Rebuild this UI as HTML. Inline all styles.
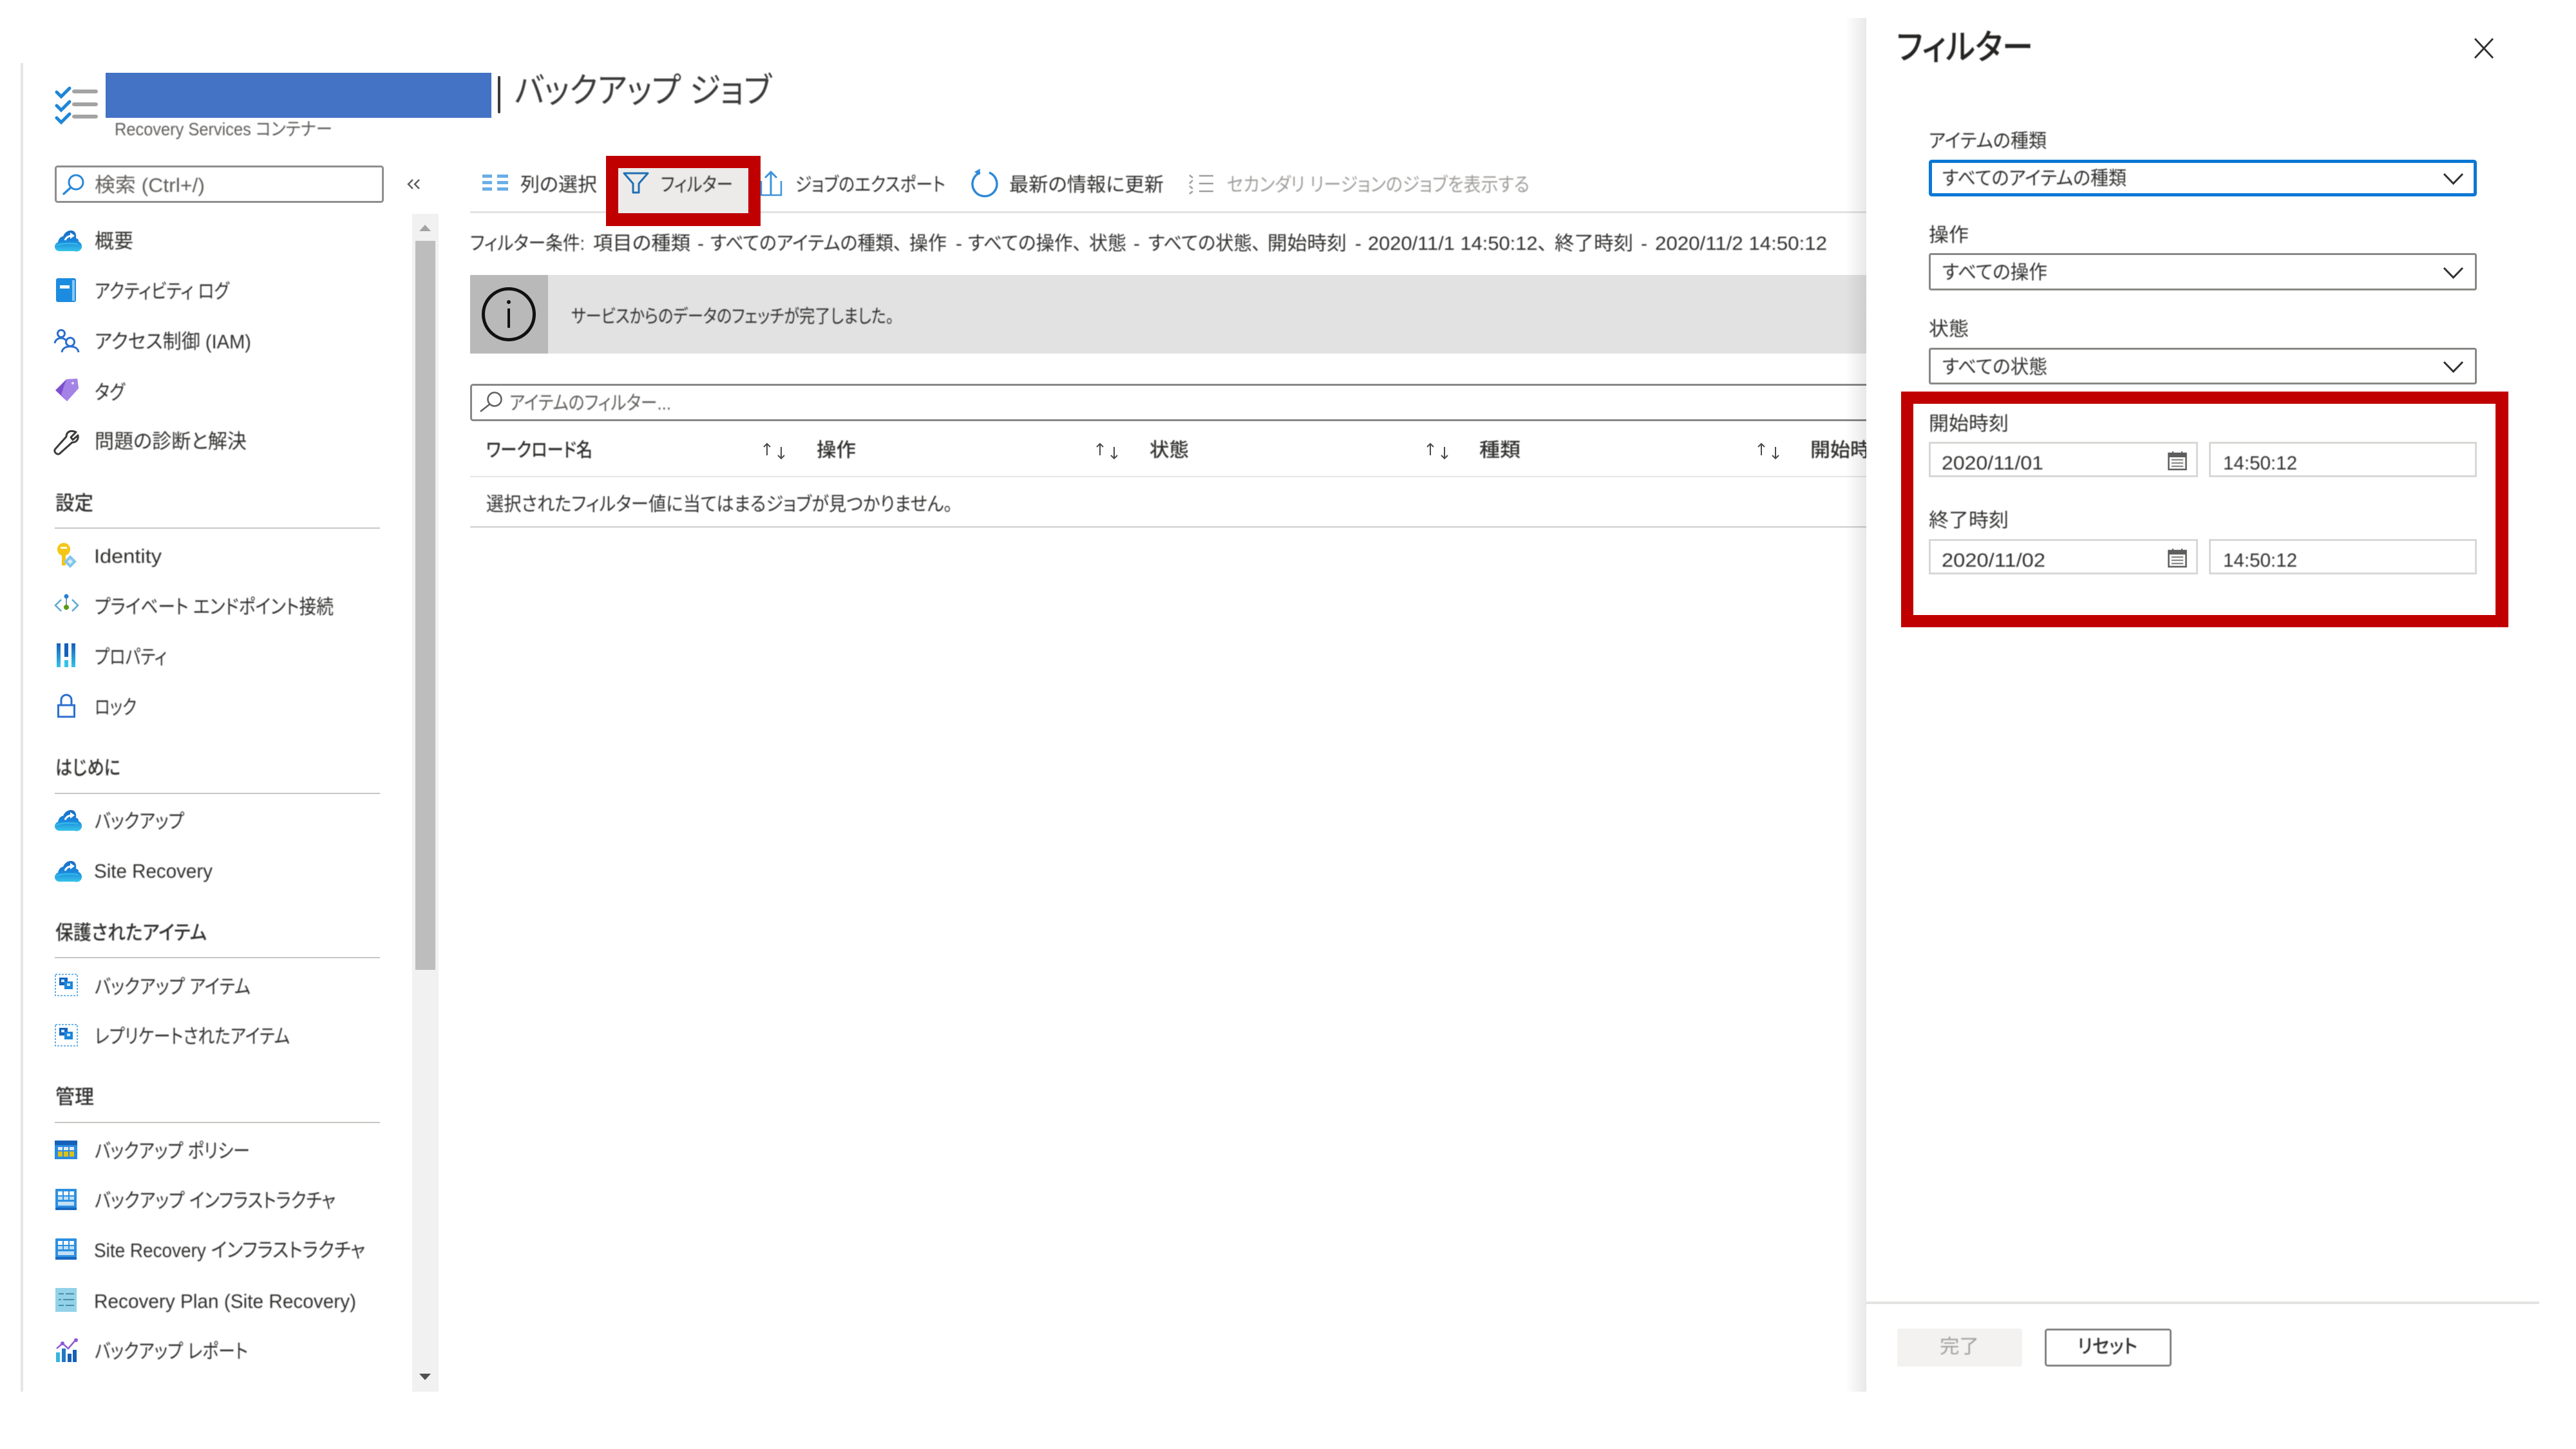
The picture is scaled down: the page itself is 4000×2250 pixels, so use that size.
<!DOCTYPE html>
<html lang="ja">
<head>
<meta charset="utf-8">
<title>バックアップ ジョブ</title>
<style>
html,body{margin:0;padding:0;background:#fff;width:4000px;height:2250px;overflow:hidden}
svg{display:block;position:absolute;left:0;top:0}
text{font-family:"Liberation Sans","Noto Sans CJK JP",sans-serif;font-feature-settings:"palt";fill:#323130;font-size:31px}
.txt{filter:blur(.85px)}
.b{font-weight:700;fill:#3b3a39}
.m{font-weight:500}
.g{fill:#605e5c}
.d{fill:#a19f9d}
.s{font-size:30px}
.ln{fill:#c8c6c4}
</style>
</head>
<body>
<svg width="4000" height="2250" viewBox="0 0 4000 2250" xmlns="http://www.w3.org/2000/svg">
<defs>
<linearGradient id="sh" x1="0" x2="1" y1="0" y2="0"><stop offset="0" stop-color="#000" stop-opacity="0"/><stop offset="1" stop-color="#000" stop-opacity=".09"/></linearGradient>
<linearGradient id="cl" x1="0" x2="0" y1="0" y2="1"><stop offset="0" stop-color="#1b6ec2"/><stop offset=".5" stop-color="#1a86dc"/><stop offset="1" stop-color="#38c6ea"/></linearGradient>
<linearGradient id="bar" x1="0" x2="0" y1="0" y2="1"><stop offset="0" stop-color="#1560b8"/><stop offset="1" stop-color="#35c3e8"/></linearGradient>
<symbol id="cloud" viewBox="0 0 37 33" overflow="visible">
<path d="M7 33a7 7 0 0 1-2-13.700C6 13 10 10 13 10c2-6 8-10 14-9 5 1 7 6 6 12 4 1 4 3 4 5a8 8 0 0 1-6 15z" fill="url(#cl)"/>
<path d="M16 16c2-5 6-7 12-7" fill="none" stroke="#fff" stroke-width="3"/><path d="M24 4l7 5-7 5z" fill="#fff"/>
<path d="M1 24q16-5 35-2" fill="none" stroke="#3ccbee" stroke-width="2" opacity=".7"/>
</symbol>
<symbol id="dash" viewBox="0 0 36 35" overflow="visible">
<rect x="1" y="1" width="34" height="33" fill="#fff" stroke="#5aa9e6" stroke-width="1.800" stroke-dasharray="3 2"/>
<rect x="7" y="6" width="13" height="12" fill="#1665c0"/><rect x="15" y="12" width="13" height="12" fill="#1a86dc"/>
<rect x="10" y="9" width="5" height="4" fill="#cfe6f8"/><rect x="19" y="15" width="5" height="4" fill="#cfe6f8"/>
</symbol>
<symbol id="tbl" viewBox="0 0 33 33" overflow="visible">
<rect width="33" height="33" rx="1" fill="#2d8fe0"/><rect x="0" y="29" width="33" height="4" fill="#1766c0"/>
<g fill="#fff"><rect x="4" y="4" width="7" height="6"/><rect x="13" y="4" width="7" height="6"/><rect x="22" y="4" width="7" height="6"/></g>
<g fill="#bfe0f6"><rect x="4" y="12" width="7" height="5"/><rect x="13" y="12" width="7" height="5"/><rect x="22" y="12" width="7" height="5"/><rect x="4" y="20" width="25" height="6"/></g>
</symbol>
<symbol id="sort" viewBox="0 0 40 27" overflow="visible">
<g fill="none" stroke="#4a4948" stroke-width="2"><path d="M9 20V2M4 7l5-5 5 5"/><path d="M31 7v18M26 20l5 5 5-5"/></g>
</symbol>
<symbol id="chev" viewBox="0 0 31 17" overflow="visible">
<path d="M1 1l14.500 15L30 1" fill="none" stroke="#323130" stroke-width="3"/>
</symbol>
<symbol id="cal" viewBox="0 0 30 29" overflow="visible">
<rect x="1.500" y="3" width="27" height="25" fill="#f4f4f4" stroke="#5f5e5d" stroke-width="2.500"/>
<rect x="1.500" y="3" width="27" height="6" fill="#5f5e5d"/>
<path d="M8 0v5M22 0v5" stroke="#5f5e5d" stroke-width="2"/>
<g fill="#8a8886"><rect x="6" y="12" width="18" height="2"/><rect x="6" y="17" width="18" height="2"/><rect x="6" y="22" width="18" height="2"/></g>
</symbol>
</defs>

<!-- outer page edge -->
<rect x="32" y="98" width="4" height="2063" fill="#e6e6e6"/>

<!-- header -->
<g fill="none" stroke-linecap="round">
<path d="M88 143l7 7 13-13M88 164l7 7 13-13M88 183l7 7 13-13" stroke="#1c86d8" stroke-width="5"/>
<path d="M115 142h34M115 162h34M115 181h34" stroke="#a3a3a3" stroke-width="6"/>
</g>
<rect x="164" y="113" width="599" height="70" fill="#4472c4"/>
<rect x="773" y="118" width="4" height="58" rx="2" fill="#3b3a39"/>

<!-- sidebar search -->
<rect x="86.500" y="258.500" width="508" height="55" rx="3" fill="#fff" stroke="#8f8e8d" stroke-width="3"/>
<circle cx="118" cy="283" r="11" fill="none" stroke="#2b88d8" stroke-width="3"/>
<path d="M110 291L99 301" stroke="#2b88d8" stroke-width="3.500" stroke-linecap="round"/>
<path d="M641 279l-7 7 7 7M651 279l-7 7 7 7" fill="none" stroke="#605e5c" stroke-width="2.500"/>

<!-- sidebar scrollbar -->
<rect x="640" y="332" width="41" height="1829" fill="#f1f1f1"/>
<rect x="645" y="374" width="31" height="1132" fill="#bdbdbd"/>
<path d="M651 359l9-10 9 10z" fill="#a3a3a3"/>
<path d="M651 2133l9 10 9-10z" fill="#505050"/>

<!-- sidebar lines -->
<rect x="85" y="819" width="505" height="2" class="ln"/>
<rect x="85" y="1231" width="505" height="2" class="ln"/>
<rect x="85" y="1486" width="505" height="2" class="ln"/>
<rect x="85" y="1742" width="505" height="2" class="ln"/>

<!-- sidebar icons -->
<use href="#cloud" x="85" y="357" width="37" height="33"/>
<rect x="87" y="432" width="31" height="37" rx="3" fill="#1b8ce0"/><rect x="112" y="435" width="4" height="32" fill="#8cc8f0"/><rect x="93" y="443" width="15" height="5" fill="#fff"/>
<g fill="none" stroke="#2b6fd0" stroke-width="3"><circle cx="95" cy="518" r="5.500"/><path d="M85 533c1-6 6-8 10-8 3 0 5 1 7 3"/><circle cx="109" cy="531" r="6.500"/><path d="M96 547c1-6 6-9 13-9s12 3 13 9"/></g>
<path d="M86 606l17-17 17-1 2 15-18 20z" fill="#7d4fd0"/><path d="M103 589l17-1 2 15-18 20-9-10z" fill="#a583e6"/><circle cx="113" cy="595" r="2" fill="#e6dcf8"/>
<path d="M118 671l-8 8 3 4 8-7c1 6-2 11-9 11l-19 17c-4 4-11-3-7-7l17-19c0-7 6-11 15-7z" fill="none" stroke="#3b3a39" stroke-width="3" stroke-linejoin="round"/>

<circle cx="99" cy="853" r="10" fill="#f5c518"/><rect x="96" y="860" width="6" height="18" fill="#f5c518"/><rect x="94" y="849" width="10" height="3" fill="#fff"/><rect x="102" y="871" width="5" height="3" fill="#f5c518"/>
<path d="M109 862l10 10-10 10-10-10z" fill="#84c6ea"/><path d="M109 868l4 4-4 4-4-4z" fill="#d8eefa"/>

<path d="M95 931l-9 9 9 9M112 931l9 9-9 9" fill="none" stroke="#5aa9d6" stroke-width="2.500"/>
<path d="M103 928v14" stroke="#7a9bb0" stroke-width="2"/><circle cx="103" cy="926" r="3.500" fill="#2b7fd0"/><circle cx="103" cy="943" r="4" fill="#5a9a1a"/>

<rect x="88" y="999" width="6" height="37" fill="url(#bar)"/><rect x="100" y="999" width="6" height="21" fill="#1560b8"/><rect x="100" y="1025" width="6" height="11" fill="#35c3e8"/><rect x="111" y="999" width="6" height="37" fill="url(#bar)"/>
<rect x="90.500" y="1095" width="25" height="18" fill="#fff" stroke="#2b6fd0" stroke-width="3"/><path d="M95 1095v-8a8 8 0 0 1 16 0v8" fill="none" stroke="#2b6fd0" stroke-width="3"/>

<use href="#cloud" x="85" y="1257" width="37" height="33"/>
<use href="#cloud" x="85" y="1336" width="37" height="33"/>
<use href="#dash" x="85" y="1512" width="36" height="35"/>
<use href="#dash" x="85" y="1590" width="36" height="35"/>

<rect x="85" y="1771" width="35" height="29" fill="#2a8be0"/><rect x="85" y="1771" width="35" height="7" fill="#1560b8"/>
<g fill="#dfe9f4"><rect x="90" y="1781" width="7" height="5"/><rect x="99" y="1781" width="7" height="5"/><rect x="108" y="1781" width="7" height="5"/></g>
<g fill="#d9c21c"><rect x="90" y="1788" width="7" height="8"/><rect x="99" y="1788" width="7" height="8"/><rect x="108" y="1788" width="7" height="8"/></g>
<use href="#tbl" x="86" y="1846" width="33" height="33"/>
<use href="#tbl" x="86" y="1923" width="33" height="33"/>
<rect x="86" y="2000" width="33" height="37" fill="#93d2e8"/><path d="M91 2009h8m3 0h13M91 2018h4m3 0h17M91 2027h8m3 0h13" stroke="#4a8fa8" stroke-width="2"/>
<g fill="#1f78c8"><rect x="87" y="2100" width="6" height="15" fill="#35b5e0"/><rect x="96" y="2094" width="6" height="21"/><rect x="105" y="2102" width="6" height="13" fill="#1560b8"/><rect x="113" y="2096" width="6" height="19" fill="#1560b8"/></g>
<path d="M88 2094l9-8 9 8 12-14" fill="none" stroke="#8a5ad8" stroke-width="2.500"/><g fill="#8a5ad8"><circle cx="97" cy="2086" r="3"/><circle cx="118" cy="2081" r="3"/></g>

<!-- toolbar -->
<g fill="#6aaee6"><rect x="749" y="271" width="15" height="5"/><rect x="749" y="281" width="15" height="5"/><rect x="749" y="291" width="15" height="5"/><rect x="772" y="271" width="17" height="5"/><rect x="772" y="281" width="17" height="5"/><rect x="772" y="291" width="17" height="5"/></g>
<rect x="730" y="328" width="2168" height="3" fill="#e4e3e2"/>
<rect x="941" y="242" width="240" height="109" fill="#c00000"/>
<rect x="960" y="261" width="202" height="70" fill="#edebe9"/>
<path d="M969 269h37l-14 16v14h-9v-14z" fill="none" stroke="#1f6fb5" stroke-width="3" stroke-linejoin="round"/>
<g fill="none" stroke="#3f93da" stroke-width="3"><path d="M1197 302V267M1188 276l9-9 9 9"/><path d="M1182 281v22h31v-22" stroke-width="2.500"/></g>
<path d="M1522 268a19 19 0 1 0 14 0" fill="none" stroke="#2b88d8" stroke-width="3.500"/><path d="M1522 262l-1 10-8-5z" fill="#2b88d8"/>
<g fill="none" stroke="#a19f9d" stroke-width="2.500"><path d="M1862 273h22M1862 285h22M1862 297h22"/><path d="M1847 272l5 4M1852 280l-5 5M1847 289l5 4M1852 297l-5 4"/></g>

<!-- filter text banner -->
<rect x="730" y="427" width="2168" height="122" fill="#e2e2e2"/>
<rect x="730" y="427" width="121" height="122" fill="#b9b9b9"/>
<circle cx="790" cy="488" r="39.500" fill="none" stroke="#111" stroke-width="5"/>
<rect x="788" y="479" width="4" height="30" fill="#111"/><circle cx="790" cy="469" r="3" fill="#111"/>

<!-- filter input -->
<rect x="731.500" y="597.500" width="2300" height="55" rx="3" fill="#fff" stroke="#8a8886" stroke-width="3"/>
<circle cx="768" cy="620" r="10.500" fill="none" stroke="#605e5c" stroke-width="2.500"/>
<path d="M760 628l-14 11" stroke="#605e5c" stroke-width="2.500"/>

<!-- table -->
<use href="#sort" x="1182" y="687" width="40" height="27"/>
<use href="#sort" x="1699" y="687" width="40" height="27"/>
<use href="#sort" x="2212" y="687" width="40" height="27"/>
<use href="#sort" x="2726" y="687" width="40" height="27"/>
<rect x="730" y="739" width="2168" height="2" fill="#e8e7e6"/>
<rect x="730" y="817" width="2168" height="2.500" fill="#d4d3d2"/>

<!-- main text -->
<g class="txt">
<text x="799" y="159" style="font-size:54px;fill:#3b3a39" textLength="399" lengthAdjust="spacingAndGlyphs">バックアップ ジョブ</text>
<text x="178" y="210" class="g" style="font-size:28px" textLength="338" lengthAdjust="spacingAndGlyphs">Recovery Services コンテナー</text>
<text x="147" y="298" class="g" textLength="171" lengthAdjust="spacingAndGlyphs">検索 (Ctrl+/)</text>

<text x="147" y="385" textLength="60" lengthAdjust="spacingAndGlyphs">概要</text>
<text x="147" y="463" textLength="209" lengthAdjust="spacingAndGlyphs">アクティビティ ログ</text>
<text x="147" y="541" textLength="243" lengthAdjust="spacingAndGlyphs">アクセス制御 (IAM)</text>
<text x="147" y="620" textLength="47" lengthAdjust="spacingAndGlyphs">タグ</text>
<text x="147" y="696" textLength="236" lengthAdjust="spacingAndGlyphs">問題の診断と解決</text>
<text x="86" y="792" class="m" textLength="59" lengthAdjust="spacingAndGlyphs">設定</text>
<text x="146" y="874" textLength="105" lengthAdjust="spacingAndGlyphs">Identity</text>
<text x="147" y="953" textLength="371" lengthAdjust="spacingAndGlyphs">プライベート エンドポイント接続</text>
<text x="147" y="1031" textLength="112" lengthAdjust="spacingAndGlyphs">プロパティ</text>
<text x="147" y="1109" textLength="65" lengthAdjust="spacingAndGlyphs">ロック</text>
<text x="86" y="1203" class="m" textLength="101" lengthAdjust="spacingAndGlyphs">はじめに</text>
<text x="147" y="1286" textLength="139" lengthAdjust="spacingAndGlyphs">バックアップ</text>
<text x="146" y="1363" textLength="184" lengthAdjust="spacingAndGlyphs">Site Recovery</text>
<text x="86" y="1459" class="m" textLength="235" lengthAdjust="spacingAndGlyphs">保護されたアイテム</text>
<text x="147" y="1543" textLength="242" lengthAdjust="spacingAndGlyphs">バックアップ アイテム</text>
<text x="147" y="1620" textLength="303" lengthAdjust="spacingAndGlyphs">レプリケートされたアイテム</text>
<text x="86" y="1714" class="m" textLength="60" lengthAdjust="spacingAndGlyphs">管理</text>
<text x="147" y="1798" textLength="241" lengthAdjust="spacingAndGlyphs">バックアップ ポリシー</text>
<text x="147" y="1875" textLength="374" lengthAdjust="spacingAndGlyphs">バックアップ インフラストラクチャ</text>
<text x="146" y="1952" textLength="421" lengthAdjust="spacingAndGlyphs">Site Recovery インフラストラクチャ</text>
<text x="146" y="2031" textLength="407" lengthAdjust="spacingAndGlyphs">Recovery Plan (Site Recovery)</text>
<text x="147" y="2109" textLength="238" lengthAdjust="spacingAndGlyphs">バックアップ レポート</text>

<text x="808" y="297" class="s" textLength="119" lengthAdjust="spacingAndGlyphs">列の選択</text>
<text x="1026" y="297" class="s" textLength="112" lengthAdjust="spacingAndGlyphs">フィルター</text>
<text x="1235" y="297" class="s" textLength="233" lengthAdjust="spacingAndGlyphs">ジョブのエクスポート</text>
<text x="1567" y="297" class="s" textLength="240" lengthAdjust="spacingAndGlyphs">最新の情報に更新</text>
<text x="1905" y="297" class="s d" textLength="470" lengthAdjust="spacingAndGlyphs">セカンダリ リージョンのジョブを表示する</text>

<text x="730" y="388" class="s" textLength="178" lengthAdjust="spacingAndGlyphs">フィルター条件:</text>
<text x="921" y="388" class="s" textLength="151" lengthAdjust="spacingAndGlyphs">項目の種類</text>
<text x="1083" y="388" class="s">-</text>
<text x="1103" y="388" class="s" textLength="298" lengthAdjust="spacingAndGlyphs">すべてのアイテムの種類、</text>
<text x="1412" y="388" class="s" textLength="58" lengthAdjust="spacingAndGlyphs">操作</text>
<text x="1484" y="388" class="s">-</text>
<text x="1503" y="388" class="s" textLength="177" lengthAdjust="spacingAndGlyphs">すべての操作、</text>
<text x="1691" y="388" class="s" textLength="58" lengthAdjust="spacingAndGlyphs">状態</text>
<text x="1760" y="388" class="s">-</text>
<text x="1783" y="388" class="s" textLength="175" lengthAdjust="spacingAndGlyphs">すべての状態、</text>
<text x="1968" y="388" class="s" textLength="123" lengthAdjust="spacingAndGlyphs">開始時刻</text>
<text x="2104" y="388" class="s">-</text>
<text x="2124" y="388" class="s" textLength="279" lengthAdjust="spacingAndGlyphs">2020/11/1 14:50:12、</text>
<text x="2414" y="388" class="s" textLength="122" lengthAdjust="spacingAndGlyphs">終了時刻</text>
<text x="2548" y="388" class="s">-</text>
<text x="2570" y="388" class="s" textLength="267" lengthAdjust="spacingAndGlyphs">2020/11/2 14:50:12</text>

<text x="887" y="501" style="font-size:29px" textLength="501" lengthAdjust="spacingAndGlyphs">サービスからのデータのフェッチが完了しました。</text>
<text x="791" y="636" class="s g" textLength="251" lengthAdjust="spacingAndGlyphs">アイテムのフィルター...</text>

<text x="755" y="709" class="s m" textLength="165" lengthAdjust="spacingAndGlyphs">ワークロード名</text>
<text x="1268" y="709" class="s m" textLength="61" lengthAdjust="spacingAndGlyphs">操作</text>
<text x="1785" y="709" class="s m" textLength="61" lengthAdjust="spacingAndGlyphs">状態</text>
<text x="2297" y="709" class="s m" textLength="64" lengthAdjust="spacingAndGlyphs">種類</text>
<text x="2811" y="709" class="s m" textLength="124" lengthAdjust="spacingAndGlyphs">開始時刻</text>
<text x="755" y="793" class="s" textLength="724" lengthAdjust="spacingAndGlyphs">選択されたフィルター値に当てはまるジョブが見つかりません。</text>
</g>

<!-- panel -->
<rect x="2865" y="28" width="33" height="2133" fill="url(#sh)"/>
<rect x="2898" y="28" width="1102" height="2222" fill="#fff"/>
<rect x="0" y="2161" width="2898" height="89" fill="#fff"/>
<path d="M3843 60l28 30M3871 60l-28 30" stroke="#323130" stroke-width="2.800" fill="none"/>

<rect x="2997.500" y="250.500" width="846" height="52" rx="2" fill="#fff" stroke="#0a78d4" stroke-width="5"/>
<rect x="2996.500" y="394.500" width="848" height="55" rx="2" fill="#fff" stroke="#8a8886" stroke-width="3"/>
<rect x="2996.500" y="541.500" width="848" height="54" rx="2" fill="#fff" stroke="#8a8886" stroke-width="3"/>
<use href="#chev" x="3794" y="269" width="31" height="17"/>
<use href="#chev" x="3794" y="415" width="31" height="17"/>
<use href="#chev" x="3794" y="561" width="31" height="17"/>

<rect x="2952" y="608" width="943" height="366" fill="#c00000"/>
<rect x="2971" y="627" width="904" height="328" fill="#fff"/>
<g fill="#fff" stroke="#d9d8d7" stroke-width="3">
<rect x="2996.500" y="687.500" width="415" height="52"/>
<rect x="3431.500" y="687.500" width="413" height="52"/>
<rect x="2996.500" y="838.500" width="415" height="52"/>
<rect x="3431.500" y="838.500" width="413" height="52"/>
</g>
<use href="#cal" x="3366" y="701" width="30" height="29"/>
<use href="#cal" x="3366" y="852" width="30" height="29"/>

<rect x="2898" y="2021" width="1045" height="4" fill="#e4e3e2"/>
<rect x="2946" y="2063" width="194" height="59" rx="3" fill="#f3f2f1"/>
<rect x="3176.500" y="2064.500" width="194" height="56" rx="3" fill="#fff" stroke="#8a8886" stroke-width="3"/>

<g class="txt">
<text x="2945" y="92" class="m" style="font-size:54px;fill:#252423" textLength="212" lengthAdjust="spacingAndGlyphs">フィルター</text>
<text x="2995" y="229" class="s" textLength="183" lengthAdjust="spacingAndGlyphs">アイテムの種類</text>
<text x="3016" y="287" class="s" textLength="286" lengthAdjust="spacingAndGlyphs">すべてのアイテムの種類</text>
<text x="2995" y="375" class="s" textLength="62" lengthAdjust="spacingAndGlyphs">操作</text>
<text x="3016" y="433" class="s" textLength="163" lengthAdjust="spacingAndGlyphs">すべての操作</text>
<text x="2995" y="521" class="s" textLength="62" lengthAdjust="spacingAndGlyphs">状態</text>
<text x="3016" y="580" class="s" textLength="163" lengthAdjust="spacingAndGlyphs">すべての状態</text>
<text x="2995" y="668" class="s" textLength="124" lengthAdjust="spacingAndGlyphs">開始時刻</text>
<text x="3015" y="729" class="s" textLength="158" lengthAdjust="spacingAndGlyphs">2020/11/01</text>
<text x="3452" y="729" class="s" textLength="115" lengthAdjust="spacingAndGlyphs">14:50:12</text>
<text x="2995" y="818" class="s" textLength="124" lengthAdjust="spacingAndGlyphs">終了時刻</text>
<text x="3015" y="880" class="s" textLength="161" lengthAdjust="spacingAndGlyphs">2020/11/02</text>
<text x="3452" y="880" class="s" textLength="115" lengthAdjust="spacingAndGlyphs">14:50:12</text>
<text x="3012" y="2101" class="s d" textLength="61" lengthAdjust="spacingAndGlyphs">完了</text>
<text x="3226" y="2101" class="s m" textLength="93" lengthAdjust="spacingAndGlyphs">リセット</text>
</g>
</svg>
</body>
</html>
